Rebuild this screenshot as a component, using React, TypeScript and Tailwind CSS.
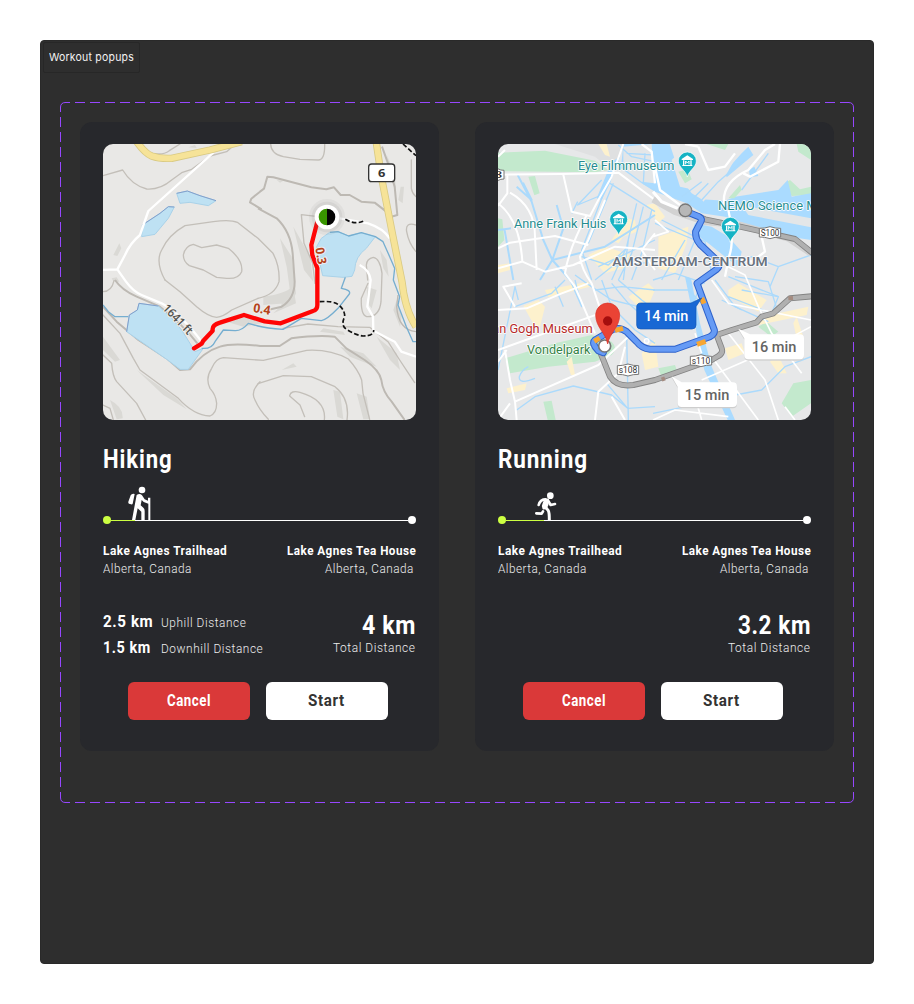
import { useLayoutEffect, useRef, useState } from "react";
import type { ReactNode } from "react";

/* Text condensed horizontally so that it fills the given width. */
function Fit({ width, className, children, right }: { width: number; className: string; children: ReactNode; right?: boolean }) {
  const ref = useRef<HTMLSpanElement>(null);
  const [k, setK] = useState(1);
  useLayoutEffect(() => {
    if (ref.current) setK(width / ref.current.offsetWidth);
  }, [width]);
  return (
    <span className={"flex " + (right ? "justify-end " : "") + className} style={{ width }}>
      <span ref={ref} className={"block shrink-0 whitespace-nowrap " + (right ? "origin-right" : "origin-left")} style={{ transform: `scaleX(${k})` }}>
        {children}
      </span>
    </span>
  );
}

function HikerIcon() {
  return (
    <svg viewBox="113 169 69 102" className="block h-[34px] w-[23px]" fill="#fff">
      <circle cx="155" cy="181" r="10" />
      <path d="M121 197Q124 191 133 193L127 222Q126 225 122 224L116 222Q113 221 114 216Z" />
      <path d="M139 196Q148 189 155 197L163 209L173 213V204H180V271H174V222L160 217L154 211L151 227L159 234Q163 238 163 244V271H153V246L142 236L135 271H125L134 222Z" />
    </svg>
  );
}

function RunnerIcon() {
  return (
    <svg viewBox="164 187 66 84" className="block h-7 w-[22px]" fill="none" stroke="#fff" strokeLinecap="round" strokeLinejoin="round">
      <circle cx="210" cy="198" r="10" fill="#fff" stroke="none" />
      <path d="M187 210L203 209L202 225L197 236L189 237L187 229L192 213Z" fill="#fff" strokeWidth="5" />
      <path d="M196 209Q180 208 175 226M203 212L211 226L224 223" strokeWidth="8" />
      <path d="M196 233L204 243Q207 248 207 271" strokeWidth="9" />
      <path d="M188 245L184 252L168 251" strokeWidth="8" />
    </svg>
  );
}

function HikingMap() {
  return (
    <svg viewBox="9 12 939 828" className="block h-[276px] w-[313px] rounded-[10px]" fontFamily="Open Sans, sans-serif">
      <rect x="0" y="0" width="960" height="850" fill="#e9e8e6" />
      <g fill="#dad9d5">
        <path d="M40 345L58 310L64 325L52 348ZM265 22L285 15L290 24ZM9 590L60 660L45 665L9 630ZM110 690L230 775L260 808L190 765ZM30 780Q70 800 68 835L50 838ZM35 415L50 412L58 425L40 424Z" />
        <path d="M540 295L575 350L588 460L575 490L560 380ZM580 260L630 350L640 425L612 390ZM540 500L580 440L588 490L520 520ZM770 760L800 770L810 838L790 838ZM895 180L902 140L912 140L908 190ZM840 330L860 360L866 410L850 385ZM670 565L730 575L735 585L660 575ZM720 620L790 640L830 680L800 670L750 650ZM700 750L720 755L730 838L712 830ZM490 470Q560 460 575 440L560 490L490 495ZM545 690L580 670L590 680ZM830 590L890 640L900 690L870 660ZM890 480L905 530L900 560L880 510ZM380 545Q460 520 510 545L430 560ZM800 440L830 450L815 505L802 490ZM530 120L550 122L540 128ZM860 45L885 100L888 160L875 120Z" />
      </g>
      <g fill="none" stroke="#c3bfb9" strokeWidth="4" strokeLinejoin="round" strokeLinecap="round">
        <path d="M9 107L68 90Q95 135 140 147Q180 150 215 120L245 98L275 88L330 48L380 35L395 22M165 41Q190 45 208 32L240 12" />
        <path d="M195 420Q165 365 185 330Q205 285 255 257L340 245Q390 238 412 247L474 295L519 340Q540 380 537 425Q525 465 474 475" />
        <path d="M250 345Q255 318 280 313L305 323L350 315L385 325Q430 360 425 395Q415 418 380 415L350 412L310 390L268 377Q250 365 250 345Z" />
        <path d="M195 420L240 455L290 500Q325 530 350 532Q370 530 395 510L474 475" />
        <path d="M512 12Q513 42 550 50L600 58L655 60Q675 60 674 12M934 60V145Q936 160 948 170M948 255Q915 245 920 275Q926 310 948 335" />
        <path d="M655 230L604 224L612 310L638 370L645 430" />
        <path d="M804 430L784 475Q782 525 800 530Q838 532 843 485L846 400Q840 355 820 352Q800 356 799 375L803 420" />
        <path d="M9 455Q35 455 42 422M9 525L60 580L100 655L120 690L235 775Q280 825 330 828Q350 820 350 790Q348 765 330 745Q315 715 335 685Q347 655 370 653L490 661L620 631Q690 627 745 657Q775 690 785 720L789 760L809 838" />
        <path d="M9 645L35 670Q38 710 50 725L110 790L137 840M9 795L30 805L40 840M480 725Q450 755 465 780Q478 810 505 838" />
        <path d="M474 731L550 707L634 710L705 740Q750 775 741 840M569 767Q572 750 600 757Q680 780 673 840M569 768L600 795L614 830" />
        <path d="M549 565L624 552L714 560L809 562L864 605L899 660L944 728" />
      </g>
      <g fill="none" stroke="#bdb9b3" strokeWidth="6" strokeLinejoin="round">
        <path d="M485 208L450 187L454 176L480 155L492 146L502 110L520 112L634 142L679 148L702 142L722 165L749 165L784 185L824 188L859 215L876 245" />
        <path d="M474 205L530 235Q572 275 578 340L584 425Q584 475 545 500L474 517" />
        <path d="M846 20L864 70L884 140L892 225L874 230L850 205" />
        <path d="M9 500L50 545L115 600L200 655L240 690L270 688Q310 635 360 620Q395 608 480 618L539 618L574 595Q650 585 704 590L739 625L794 660Q838 690 844 720Q848 755 875 785L914 840M45 420Q65 450 110 470L180 500Q250 555 292 610" />
        <path d="M948 575Q895 570 890 500L894 465" strokeWidth="4" />
      </g>
      <g fill="#bee1f3" stroke="#a9d2e9" strokeWidth="3" strokeLinejoin="round">
        <path d="M230 160L262 153L300 167L348 182L325 197L270 187L240 190Z" />
        <path d="M127 255L180 220L205 200L223 201L205 235L165 283L125 290Z" />
        <path d="M117 490L175 498L215 535L245 570L270 610L285 635L310 625L265 688L240 688L200 658L80 575L88 525L112 510Z" />
        <path d="M650 320L664 295L689 277L714 275L746 288L784 278L826 290L799 325Q765 350 764 390L756 409L729 412L668 407L655 350Z" />
      </g>
      <path d="M230 160L262 153L300 167L348 182M127 255L180 220L205 200L223 201M80 575L88 525L112 510L117 490L175 498" fill="none" stroke="#829fcb" strokeWidth="3" />
      <g fill="none" stroke="#76aed0" strokeWidth="4" strokeLinejoin="round">
        <path d="M9 495L25 515L45 530L85 530M690 277L714 275L746 288L784 278L826 290L849 305L869 350L884 385L880 420L899 470L894 495L919 560L939 605H948" />
        <path d="M736 412L724 445Q754 450 748 462L714 505Q680 540 664 542L604 535Q580 550 549 568Q500 565 474 558L445 550Q425 573 405 572L370 570L345 605Q335 628 305 625" />
      </g>
      <g fill="none" stroke="#fff" strokeWidth="7" strokeLinejoin="round">
        <path d="M340 38L145 213L120 285Q90 310 75 345L52 388L5 390M52 388L78 425Q100 455 125 465L185 490Q240 520 305 605" />
        <path d="M719 235L804 250Q850 265 869 295M779 375Q808 390 812 420L802 500L819 530L820 572L884 605L904 635L948 650" />
      </g>
      <g fill="none" strokeLinejoin="round">
        <path d="M110 5Q135 40 155 48Q180 57 215 55L330 30L425 5M829 8L844 110L879 290L906 425Q915 510 948 560" stroke="#d9ca83" strokeWidth="22" />
        <path d="M110 5Q135 40 155 48Q180 57 215 55L330 30L425 5M829 8L844 110L879 290L906 425Q915 510 948 560" stroke="#f6e398" strokeWidth="17" />
        <path d="M736 238Q764 255 791 243M659 485Q700 482 715 494Q735 510 734 530Q722 555 738 567Q765 585 789 588Q822 588 821 570M909 12L948 47" stroke="#111" strokeWidth="5" strokeDasharray="14 7" />
        <path d="M652 245L634 315L637 345L652 385V495Q652 510 639 513L542 550L494 544L432 525L360 548Q335 555 338 572L310 602L305 611L282 625" stroke="#ff0505" strokeWidth="13" strokeLinecap="round" />
      </g>
      <circle cx="681" cy="231" r="54" fill="#777" opacity=".07" />
      <circle cx="681" cy="231" r="46" fill="#777" opacity=".1" />
      <circle cx="681" cy="231" r="37" fill="#fff" />
      <path d="M681 206A25 25 0 0 0 681 256Z" fill="#389500" />
      <path d="M681 206A25 25 0 0 1 681 256Z" fill="#050505" />
      <rect x="806" y="72" width="78" height="53" rx="9" fill="#fff" stroke="#333" strokeWidth="4" />
      <text x="845" y="110" fontSize="34" fontWeight="700" fill="#333" textAnchor="middle" textLength="22" lengthAdjust="spacingAndGlyphs">6</text>
      <g paintOrder="stroke" stroke="#efeeec" strokeWidth="6" strokeLinejoin="round">
        <text transform="translate(646 325) rotate(80)" fontSize="37" fontWeight="700" fill="#b5441c" textLength="50" lengthAdjust="spacingAndGlyphs">0.3</text>
        <text transform="translate(458 516) rotate(9)" fontSize="38" fontWeight="700" fill="#b5441c" textLength="52" lengthAdjust="spacingAndGlyphs">0.4</text>
        <text transform="translate(186 506) rotate(46)" fontSize="36" fontWeight="600" fill="#51514d" textLength="112" lengthAdjust="spacingAndGlyphs">1641 ft</text>
      </g>
    </svg>
  );
}

function MuseumPin({ x, y }: { x: number; y: number }) {
  return (
    <g transform={`translate(${x} ${y})`}>
      <path d="M0 47C-4 28 -27 18 -27 -1A27 27 0 0 1 27 -1C27 18 4 28 0 47Z" fill="#16b3c4" stroke="#fff" strokeWidth="2" />
      <path d="M-17 -7L0 -18L17 -7V-4H-17ZM-13 -3H-9V11H-13ZM9 -3H13V11H9ZM-15 11H15V14H-15Z" fill="#fff" />
      <path d="M-5 9V-1L0 5L5 -1V9" fill="none" stroke="#fff" strokeWidth="3" />
    </g>
  );
}

function RoadBadge({ x, y, w, label }: { x: number; y: number; w: number; label: string }) {
  return (
    <g transform={`translate(${x} ${y})`}>
      <path d={`M${-w / 2} -13L${-w / 4} -14L0 -18L${w / 4} -14L${w / 2} -13V13L${w / 4} 14L0 18L${-w / 4} 14L${-w / 2} 13Z`} fill="#fff" stroke="#777" strokeWidth="3" />
      <text y="9" fontSize="27" fill="#333" textAnchor="middle" textLength={w - 8} lengthAdjust="spacingAndGlyphs">{label}</text>
    </g>
  );
}

function RunningMap() {
  return (
    <svg viewBox="9 12 939 828" className="block h-[276px] w-[313px] rounded-[10px]" fontFamily="Roboto, sans-serif">
      <rect x="0" y="0" width="960" height="850" fill="#e7e8e9" />
      <path d="M180 12H385L360 100L300 50Z" fill="#dfe0e1" />
      <g fill="#c3e9cd">
        <path d="M9 38L150 32L300 62L340 90L300 97L9 93ZM100 110L120 108L134 160L118 166ZM9 235L22 238L28 300L9 320ZM30 655L180 610L290 585L350 605Q370 625 350 645L300 665L160 680L45 700ZM145 785L170 782L182 840L158 840Z" />
        <path d="M905 12H948V60L910 35ZM870 130L885 120L915 148L948 140V165L890 168ZM860 790L895 730L948 720V790L890 830ZM790 560L815 545L850 575L828 590ZM490 685L540 675L545 690L500 712Z" />
      </g>
      <g fill="#fdf1cd">
        <path d="M310 12L335 12L345 50L330 45ZM455 195L480 190L510 230L490 250ZM395 235L420 240L425 275L385 290L370 310L350 300ZM280 345L330 320L410 345L400 380L330 400ZM9 375L45 370L45 390L9 400ZM85 498L130 480L150 500L135 560L120 560ZM150 450L280 425L285 440L160 472ZM215 665L230 650L240 705L228 705ZM35 745L95 730L90 750L40 760ZM400 470L460 430L480 450L450 520ZM440 640L480 600L490 680L450 690Z" />
        <path d="M490 290L580 260L575 310L540 400L490 385ZM700 450L730 430L815 480L790 515L700 470ZM780 535L940 500L935 525L790 555ZM690 625L740 610L750 640L700 660ZM825 665L850 645L875 700L850 700ZM895 550L905 530L925 590L905 595Z" />
      </g>
      <g fill="#aadbff">
        <path d="M385 12H524L540 60L565 125L590 160L620 178L690 182L720 170L850 150L878 120L890 170L948 160V300L850 285L735 245L690 230L620 220L575 190L480 155L440 130L378 85Z" />
        <path d="M700 290L740 335L730 380L690 350L640 310L590 275L600 250L650 260ZM350 65L375 50L345 130L320 180L305 175ZM762 90L778 80L790 108L765 112ZM740 40L760 20L775 45L695 112L690 95Z" />
        <path d="M570 410L588 415L615 550L650 680L720 840H698L628 690Z" />
      </g>
      <path d="M385 20L470 12L478 130L440 125L385 85ZM740 196L948 235V262L760 225Z" fill="#e3e6e8" />
      <path d="M530 60L580 12L700 12L730 40L690 110L625 185L600 150L555 140Z" fill="#e7e8e9" />
      <path d="M550 95L578 88L590 118L570 130ZM635 12H700L690 30ZM700 175L735 135L740 150L718 175Z" fill="#c3e9cd" />
      <g fill="none" stroke="#abdafc" strokeLinejoin="round" strokeWidth="4">
        <path d="M68 105L110 185L145 300L172 360L135 420M65 140L110 180L84 128M172 360L205 265L185 195M172 360L225 420M28 265L55 420M9 270L48 265M172 360L330 320L480 225" strokeWidth="6" />
        <path d="M320 120L248 195L320 165M248 185L230 220M330 150L260 330L290 420M345 130L480 215M355 130L280 310M395 40L480 45M370 15L410 50L480 65M450 40L445 130L480 150M400 300L385 420M425 190L395 320L350 420M445 200L410 340L370 420M470 210L440 340L410 420" />
        <path d="M260 350L340 375L400 320M300 420L350 380L480 365M310 380L480 300M210 420L170 460L60 500M240 420L260 500L225 420M9 690L60 440L70 480M240 405L275 430L350 480L430 500" />
        <path d="M180 440L205 500M120 715Q70 735 73 710Q80 690 100 680M65 810L120 770L235 738L350 765L398 805L480 800M395 580L400 840M335 730L398 805M320 420L350 500L420 570L480 610M350 430L400 490L480 560M370 420L440 480L520 540M300 450L380 440L480 450" />
        <path d="M480 250L600 300L680 365M500 240L630 305L650 400M474 420L540 400L630 430M474 450L580 450L620 490M600 300L550 420M570 300L500 420M640 400L610 450L570 560M474 530L560 560" />
        <path d="M710 380L770 350L850 380L948 345M720 410L820 425L850 520M850 380L825 440M740 450L850 470M680 480L740 510M640 780L800 750L870 680L948 650M474 820L620 790" />
        <path d="M700 410L850 470L830 520L700 470M660 420L720 500L820 545M750 60L700 100M620 180L670 125L740 65M560 170L620 125M580 190L640 130M820 40L740 150" />
      </g>
      <g fill="none" stroke="#fff" strokeWidth="6" strokeLinejoin="round">
        <path d="M9 104L200 102L370 98L480 180M30 30L9 50M37 104V160L9 198M45 158Q120 200 120 290L125 390M9 190Q75 240 82 365L150 395L235 375L360 320L480 330M205 104L230 215L285 228L310 180L350 110L385 12M275 225Q220 330 210 400L240 440L300 580M330 180L280 300L255 350Q260 390 290 430L320 520M9 325L45 308L180 288L280 315M480 280L440 330L480 390M9 385L80 365" />
        <path d="M9 510L95 505L200 460L280 430M60 500L25 440L80 430M9 630L315 520M30 630L45 720L60 785L65 840M60 785L310 675L400 590M350 770L390 840M300 840L310 755L370 700L390 620M45 790L9 840M35 630L9 665" />
        <path d="M480 80L495 150L555 195M440 12L470 35L480 130M690 210Q670 130 760 90L810 30L840 12M700 210Q720 300 702 350L690 410M610 20L640 90L690 80L720 40M745 100L765 110L850 65L855 12M610 20L570 12M800 290L810 335L770 365L702 350" strokeWidth="7" />
        <path d="M480 240L520 275L474 290M700 380L750 405L790 500L830 580L920 700M650 420L700 490L948 540M600 580L620 640M650 650L790 840M870 800L900 840M600 770L620 840M474 840L540 810L700 830M700 580L810 720L850 840M620 720L780 650L948 560" strokeWidth="5" />
      </g>
      <path d="M474 178L540 215L630 245L735 255L880 295L948 340" fill="none" stroke="#d2d2d2" strokeWidth="20" />
      <path d="M474 155L500 185L548 205" fill="none" stroke="#fff" strokeWidth="9" />
      <g fill="none" strokeLinejoin="round" strokeLinecap="round">
        <path d="M315 635L345 710Q365 742 415 735L480 720L650 660L670 648Q685 640 680 625L665 585L710 570L785 547L800 530L835 520L885 475L960 468M575 215L630 238L735 260L900 297L960 345" stroke="#838383" strokeWidth="18" />
        <path d="M315 635L345 710Q365 742 415 735L480 720L650 660L670 648Q685 640 680 625L665 585L710 570L785 547L800 530L835 520L885 475L960 468M575 215L630 238L735 260L900 297L960 345" stroke="#b0b0b0" strokeWidth="13" />
        <path d="M880 475L894 474M500 719L510 715" stroke="#a48b80" strokeWidth="12" strokeLinecap="butt" />
        <path d="M575 215L612 230Q625 236 615 250L602 275Q600 295 615 313L665 360Q680 375 665 388L606 430L658 570Q660 582 645 590L540 628L465 628Q440 625 425 605L395 575Q375 560 355 568L300 600Q288 610 310 632L325 638" stroke="#2e62cb" strokeWidth="21" />
        <path d="M575 215L612 230Q625 236 615 250L602 275Q600 295 615 313L665 360Q680 375 665 388L606 430L658 570Q660 582 645 590L540 628L465 628Q440 625 425 605L395 575Q375 560 355 568L300 600Q288 610 310 632L325 638" stroke="#669bf5" strokeWidth="15" />
        <path d="M620 474L627 491M606 613L632 604M360 571L384 565M298 604L314 594" stroke="#f7a632" strokeWidth="15" strokeLinecap="butt" />
      </g>
      <circle cx="571" cy="211" r="19" fill="#b7b7b7" stroke="#777" strokeWidth="4" />
      <circle cx="329" cy="618" r="18" fill="#fff" stroke="#777" strokeWidth="5" />
      <circle cx="455" cy="603" r="7" fill="#e9eefa" stroke="#fff" strokeWidth="4" />
      <RoadBadge x={8} y={104} w={38} label="3" />
      <RoadBadge x={825} y={278} w={64} label="S100" />
      <RoadBadge x={399} y={690} w={64} label="s108" />
      <RoadBadge x={618} y={662} w={64} label="s110" />
      <MuseumPin x={371} y={239} />
      <MuseumPin x={577} y={64} />
      <MuseumPin x={706} y={260} />
      <path d="M338 612C333 580 302 562 302 525A36 36 0 0 1 374 525C374 562 343 580 338 612Z" fill="#ea4335" stroke="#d93229" strokeWidth="2" />
      <circle cx="338" cy="543" r="14" fill="#a50e0e" />
      <g fontSize="40" paintOrder="stroke" stroke="#fff" strokeWidth="5" strokeLinejoin="round">
        <text x="249" y="90" fill="#248c8f" textLength="289" lengthAdjust="spacingAndGlyphs">Eye Filmmuseum</text>
        <text x="57" y="265" fill="#248c8f" textLength="277" lengthAdjust="spacingAndGlyphs">Anne Frank Huis</text>
        <text x="669" y="210" fill="#248c8f" textLength="416" lengthAdjust="spacingAndGlyphs">NEMO Science Museum</text>
        <text x="352" y="378" fontWeight="600" fill="#6a737f" textLength="466" lengthAdjust="spacingAndGlyphs">AMSTERDAM-CENTRUM</text>
        <text x="293" y="578" fill="#b72a2a" textAnchor="end" textLength="325" lengthAdjust="spacingAndGlyphs">Van Gogh Museum</text>
        <text x="96" y="643" fill="#348347" textLength="190" lengthAdjust="spacingAndGlyphs">Vondelpark</text>
      </g>
      <g fontSize="43" fontWeight="500">
        <path d="M438 489H588L620 474L603 500V555Q603 567 591 567H437Q425 567 425 555V501Q425 489 438 489Z" fill="#1868d4" stroke="#1257b6" strokeWidth="2" />
        <text x="447" y="544" fill="#fff" textLength="133" lengthAdjust="spacingAndGlyphs">14 min</text>
        <path d="M730 566L765 583H915Q927 583 927 595V645Q927 658 915 658H760Q748 658 748 645V595Z" fill="#d2d2d2" transform="translate(0 4)" />
        <path d="M730 566L765 583H915Q927 583 927 595V645Q927 658 915 658H760Q748 658 748 645V595Z" fill="#fff" />
        <text x="770" y="636" fill="#646464" textLength="134" lengthAdjust="spacingAndGlyphs">16 min</text>
        <path d="M530 709L560 727H713Q726 727 726 740V789Q726 801 713 801H560Q548 801 548 789V740Z" fill="#cecece" transform="translate(0 4)" />
        <path d="M530 709L560 727H713Q726 727 726 740V789Q726 801 713 801H560Q548 801 548 789V740Z" fill="#fff" />
        <text x="569" y="780" fill="#646464" textLength="134" lengthAdjust="spacingAndGlyphs">15 min</text>
      </g>
    </svg>
  );
}

type WorkoutProps = { title: string; titleWidth: number; map: ReactNode; total: string; totalWidth: number; hiking?: boolean };

function WorkoutCard({ title, titleWidth, map, total, totalWidth, hiking }: WorkoutProps) {
  return (
    <section className="h-[629px] w-[359px] rounded-xl bg-[#27282c] px-[23px] pt-[22px] text-white">
      {map}
      <h2 className="mt-5">
        <Fit width={titleWidth} className="text-[25px] font-bold leading-[39px] tracking-[0.04em]">{title}</Fit>
      </h2>
      <div className="mt-px flex h-11 flex-col justify-end">
        <div className={hiking ? "flex h-9 items-end pl-[25px]" : "flex h-9 items-end pl-[37px]"}>
          {hiking ? <HikerIcon /> : <RunnerIcon />}
        </div>
        <div className="-mt-1 flex h-2 items-center">
          <i className="size-2 rounded-full bg-[#ccff42]" />
          <i className={hiking ? "h-px w-6 bg-[#ccff42]" : "h-px w-[38px] bg-[#ccff42]"} />
          <i className="h-px flex-1 bg-white" />
          <i className="size-2 rounded-full bg-white" />
        </div>
      </div>
      <div className="mt-[17px] flex justify-between text-[13.5px] leading-[18px] tracking-[0.04em]">
        <div>
          <Fit width={124} className="font-bold">Lake Agnes Trailhead</Fit>
          <Fit width={89} className="font-light text-[#eee]">Alberta, Canada</Fit>
        </div>
        <div className="flex flex-col items-end">
          <Fit right width={129} className="font-bold">Lake Agnes Tea House</Fit>
          <Fit right width={89} className="mr-0.5 font-light text-[#eee]">Alberta, Canada</Fit>
        </div>
      </div>
      <div className="mt-[31px] flex h-[52px] justify-between tracking-[0.04em]">
        <div>
          {hiking && (
            <>
              <div className="flex h-[26px] items-center">
                <Fit width={50} className="mr-2 text-[17px] font-bold leading-[26px]">2.5 km</Fit>
                <Fit width={85} className="mt-0.5 text-[13.5px] font-light leading-6 text-[#eee]">Uphill Distance</Fit>
              </div>
              <div className="flex h-[26px] items-center">
                <Fit width={47.5} className="mr-[10.5px] text-[17px] font-bold leading-[26px]">1.5 km</Fit>
                <Fit width={102} className="mt-0.5 text-[13.5px] font-light leading-6 text-[#eee]">Downhill Distance</Fit>
              </div>
            </>
          )}
        </div>
        <div className={hiking ? "flex flex-col items-end pt-1" : "flex flex-col items-end pt-1"}>
          <Fit right width={totalWidth} className="text-[25px] font-bold leading-[27px]">{total}</Fit>
          <Fit right width={83} className="text-[13.5px] font-light leading-[17px] text-[#eee]">Total Distance</Fit>
        </div>
      </div>
      <div className="mt-[22px] flex gap-4 pl-[25px] tracking-[0.04em]">
        <button className="flex h-[38px] w-[122px] items-center justify-center rounded-md bg-[#da3939]">
          <Fit width={44} className="text-[16px] font-bold">Cancel</Fit>
        </button>
        <button className="flex h-[38px] w-[122px] items-center justify-center rounded-md bg-white pr-px text-[#333]">
          <Fit width={37} className="text-[16px] font-bold">Start</Fit>
        </button>
      </div>
    </section>
  );
}

export default function App() {
  return (
    <div className="h-[1004px] w-[914px] bg-white p-10 font-['Roboto',sans-serif]">
      <main className="h-[924px] rounded-sm border border-[#292929] bg-[#2e2e2e] pl-[19px] pt-px">
        <div className="-ml-[17px] flex h-[31px] w-[97px] items-center rounded-xs border border-[#272727] pb-0.5 pl-[5px] font-['Inter',sans-serif] text-[11px] text-[#f2f2f2]">
          <Fit width={85} className="leading-4 tracking-[0.02em]">Workout popups</Fit>
        </div>
        <div className="relative mt-[29px] h-[701px] w-[794px] p-5">
          <svg className="pointer-events-none absolute inset-0" width="794" height="701" fill="none" stroke="#9747ff">
            <path d="M5 .5H789M5 700.5H789M.5 5V696M793.5 5V696" strokeDasharray="10 5" strokeDashoffset="5" />
            <path d="M.5 10V5.5Q.5 .5 5.5 .5H10M784 .5H788.5Q793.5 .5 793.5 5.5V10M.5 691V695.5Q.5 700.5 5.5 700.5H10M784 700.5H788.5Q793.5 700.5 793.5 695.5V691" />
          </svg>
          <div className="flex gap-9">
            <WorkoutCard title="Hiking" titleWidth={70} map={<HikingMap />} total="4 km" totalWidth={54} hiking />
            <WorkoutCard title="Running" titleWidth={90} map={<RunningMap />} total="3.2 km" totalWidth={73} />
          </div>
        </div>
      </main>
    </div>
  );
}
